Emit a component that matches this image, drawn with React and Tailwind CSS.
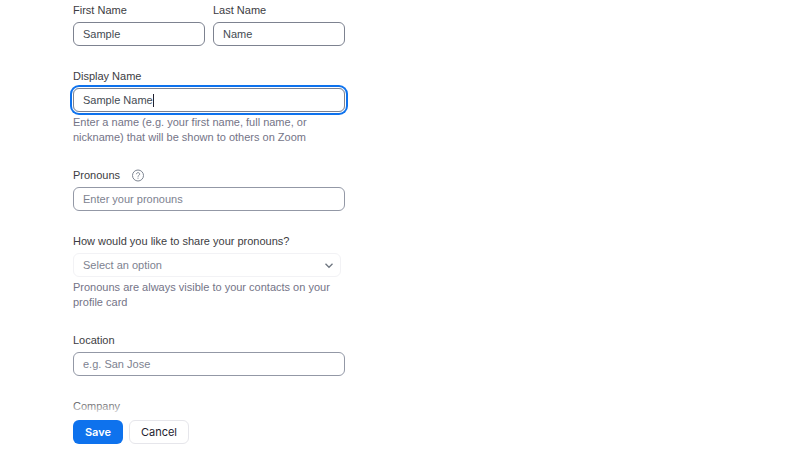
import { useState } from 'react'

const inputClass =
  'block h-6 w-full rounded-md border border-[#7d8290] bg-white px-[9px] text-[#444b53] outline-none placeholder:text-[#7d8290] placeholder:opacity-100 placeholder-shown:border-[#9398a6]'

function Field({ id, label, help, extra, children }) {
  return (
    <div className="min-w-0 flex-1">
      <div className="mb-1 flex h-4 items-center gap-3">
        <label htmlFor={id} className="text-[#3c3c42]">
          {label}
        </label>
        {extra}
      </div>
      {children}
      {help && <p className="pt-[3px] leading-[15px] text-[#747487]">{help}</p>}
    </div>
  )
}

function HelpIcon() {
  return (
    <svg className="size-3 overflow-visible" viewBox="0 0 12 12" fill="none" stroke="#7d8592" aria-hidden="true">
      <circle cx="6" cy="6.5" r="5.5" />
      <path d="M4.4 5.2C4.5 3.1 7.7 3.2 7.7 5.1C7.7 6.3 6 6.3 6 7.7" />
      <path d="M6 8.7V9.7" />
    </svg>
  )
}

export default function App() {
  const [firstName, setFirstName] = useState('Sample')
  const [lastName, setLastName] = useState('Name')
  const [displayName, setDisplayName] = useState('Sample Name')

  return (
    <form
      onSubmit={(e) => e.preventDefault()}
      className="flex h-screen flex-col bg-white font-['Liberation_Sans',sans-serif] text-[11px] leading-4"
    >
      <div className="relative min-h-0 flex-1 overflow-hidden pt-[2px] pl-[73px]">
        <div className="flex w-full max-w-[272px] flex-col gap-[22px]">
          <div className="flex gap-2">
            <Field id="first-name" label="First Name">
              <input
                id="first-name"
                type="text"
                value={firstName}
                onChange={(e) => setFirstName(e.target.value)}
                className={inputClass}
              />
            </Field>
            <Field id="last-name" label="Last Name">
              <input
                id="last-name"
                type="text"
                value={lastName}
                onChange={(e) => setLastName(e.target.value)}
                className={inputClass}
              />
            </Field>
          </div>

          <Field
            id="display-name"
            label="Display Name"
            help="Enter a name (e.g. your first name, full name, or nickname) that will be shown to others on Zoom"
          >
            <div className="relative rounded-md ring-2 ring-[#0e72ed] ring-offset-1">
              <input
                id="display-name"
                type="text"
                value={displayName}
                onChange={(e) => setDisplayName(e.target.value)}
                className={`${inputClass} caret-transparent`}
              />
              {/* text caret */}
              <div className="pointer-events-none absolute inset-y-0 left-[10px] flex items-center" aria-hidden="true">
                <span className="invisible">{displayName}</span>
                <span className="h-[13px] w-px bg-[#222230]" />
              </div>
            </div>
          </Field>

          <Field id="pronouns" label="Pronouns" extra={<HelpIcon />}>
            <input id="pronouns" type="text" placeholder="Enter your pronouns" className={inputClass} />
          </Field>

          <Field
            id="share-pronouns"
            label="How would you like to share your pronouns?"
            help="Pronouns are always visible to your contacts on your profile card"
          >
            <div className="relative mr-1">
              <select
                id="share-pronouns"
                defaultValue=""
                className="block h-6 w-full appearance-none rounded-md border border-[#f2f2f5] bg-white px-[9px] text-[#7d8290] outline-none"
              >
                <option value="">Select an option</option>
              </select>
              <svg
                className="pointer-events-none absolute top-2 right-2 size-2"
                viewBox="0 0 8 8"
                fill="none"
                stroke="#6e7680"
                strokeWidth="1.3"
                aria-hidden="true"
              >
                <path d="M0.5 2.8L4 6.3L7.5 2.8" />
              </svg>
            </div>
          </Field>

          <Field id="location" label="Location">
            <input id="location" type="text" placeholder="e.g. San Jose" className={inputClass} />
          </Field>

          <Field id="company" label="Company">
            <input id="company" type="text" className={inputClass} />
          </Field>
        </div>
        <div className="pointer-events-none absolute inset-x-0 bottom-0 h-4 bg-linear-to-t from-white to-transparent" />
      </div>

      <div className="flex gap-[6px] pt-1 pb-[6px] pl-[73px] font-['Inter',sans-serif]">
        <button type="submit" className="h-6 w-[50px] rounded-md bg-[#0e72ed] font-semibold text-white">
          Save
        </button>
        <button type="button" className="h-6 w-[60px] rounded-md border border-[#e6e6eb] bg-white text-[#222230]">
          Cancel
        </button>
      </div>
    </form>
  )
}
